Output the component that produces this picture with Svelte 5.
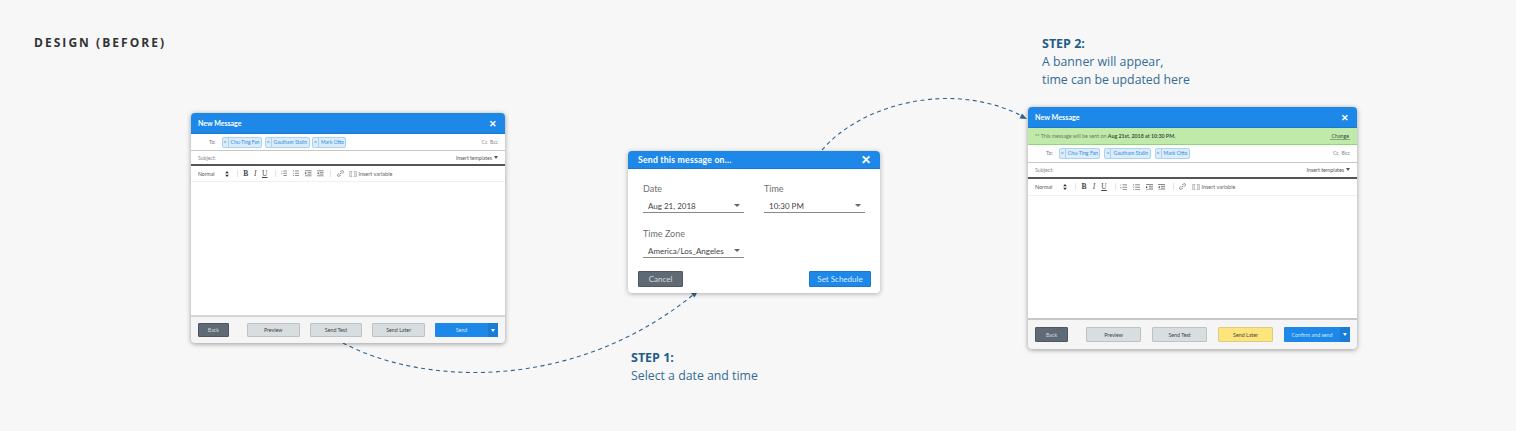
<script>
  const recipients = ['Chu-Ting Fan', 'Gautham Stalin', 'Mark Otto'];
</script>

{#snippet lines(kind)}
  <svg class="ic" viewBox="0 0 10 9" aria-hidden="true">
    {#if kind === 'ol'}
      <path d="M1 .5v2M.5 4.500h1.200L.6 6h1.200" class="thin"/><path d="M3.500 1h6.500M3.500 4.500h6.500M3.500 8h6.500"/>
    {:else if kind === 'ul'}
      <path d="M0 1h1.500M0 4.500h1.500M0 8h1.500M3 1h7M3 4.500h7M3 8h7"/>
    {:else if kind === 'in'}
      <path d="M0 .6h10M4 3.200h6M4 5.800h6M0 8.400h10"/><path d="M0 2.600 2.400 4.500 0 6.400z" class="fill"/>
    {:else}
      <path d="M0 .6h10M4 3.200h6M4 5.800h6M0 8.400h10"/><path d="M2.600 2.600 .2 4.500l2.400 1.900z" class="fill"/>
    {/if}
  </svg>
{/snippet}

{#snippet message(variant, sendLabel, banner)}
  <section class="win {variant}">
    <header class="win-head"><h2>New Message</h2><span class="x">✕</span></header>
    {#if banner}
      <div class="banner">
        <span>** This message will be sent on <b>Aug 21st, 2018 at 10:30 PM.</b></span>
        <a href="#change">Change</a>
      </div>
    {/if}
    <div class="to">
      <span class="to-label">To:</span>
      {#each recipients as r}
        <span class="chip"><i>×</i><em>{r}</em></span>
      {/each}
      <span class="cc">Cc&nbsp;&nbsp;Bcc</span>
    </div>
    <div class="subject"><span>Subject:</span><span class="tpl">Insert templates <i class="caret"></i></span></div>
    <div class="tools">
      <span class="normal">Normal</span>
      <svg class="updown" viewBox="0 0 5 8" aria-hidden="true"><path d="M2.500 0 5 3H0zM2.500 8 0 5h5z"/></svg>
      <span class="sep before-fmt"></span>
      <b class="fmt">B</b><i class="fmt it">I</i><u class="fmt">U</u>
      <span class="sep after-fmt"></span>
      {@render lines('ol')}{@render lines('ul')}{@render lines('in')}{@render lines('out')}
      <span class="sep after-ic"></span>
      <svg class="ic link" viewBox="0 0 10 10" aria-hidden="true"><path d="M4 6 6 4M3 4.600 1.300 6.300a1.700 1.700 0 0 0 2.400 2.400L5.400 7M4.600 3l1.700-1.700a1.700 1.700 0 0 1 2.400 2.400L7 5.400"/></svg>
      <span class="var">[[ ]] Insert variable</span>
    </div>
    <div class="body"></div>
    <footer class="foot">
      <button class="btn back">Back</button>
      <button class="btn grey first">Preview</button>
      <button class="btn grey">Send Test</button>
      <button class="btn {banner ? 'yellow' : 'grey'}">Send Later</button>
      <div class="send"><button class="btn main">{sendLabel}</button><span class="drop"><i class="caret"></i></span></div>
    </footer>
  </section>
{/snippet}

<main class="page">
  <h1 class="title">DESIGN (BEFORE)</h1>

  <svg class="arrows" viewBox="0 0 1516 431" aria-hidden="true">
    <path class="dash" d="M343 343C420 384 570 394 693 295"/>
    <path class="head" d="M698 291l-7 2 3.500 4.500z"/>
    <path class="dash" d="M822 150C860 105 950 80 1020 115"/>
    <path class="head" d="M1027 119l-7.500-.5 2.500-5z"/>
  </svg>

  {@render message('a', 'Send', false)}
  {@render message('b', 'Confirm and send', true)}

  <section class="dialog">
    <header class="dlg-head"><h2>Send this message on...</h2><span class="x">✕</span></header>
    <div class="fields">
      <label class="field"><span>Date</span><div class="select">Aug 21, 2018<i class="caret"></i></div></label>
      <label class="field"><span>Time</span><div class="select">10:30 PM<i class="caret"></i></div></label>
      <label class="field"><span>Time Zone</span><div class="select">America/Los_Angeles<i class="caret"></i></div></label>
    </div>
    <footer class="dlg-foot">
      <button class="dbtn cancel">Cancel</button>
      <button class="dbtn set">Set Schedule</button>
    </footer>
  </section>

  <p class="step s1"><b>STEP 1:</b><br>Select a date and time</p>
  <p class="step s2"><b>STEP 2:</b><br>A banner will appear,<br>time can be updated here</p>
</main>

<style>
  :global(body) { margin: 0; background: #f7f7f7; }
  .page { position: relative; width: 1516px; height: 431px; overflow: hidden; background: #f7f7f7; font-family: Lato, sans-serif; color: #444; }
  .title { position: absolute; left: 34px; top: 35px; margin: 0; font: 700 12px/16px "Open Sans", sans-serif; letter-spacing: 2.050px; color: #333; }
  .arrows { position: absolute; inset: 0; width: 1516px; height: 431px; }
  .dash { fill: none; stroke: #2f6391; stroke-width: 1.100; stroke-dasharray: 4 3.500; }
  .head { fill: #2f6391; }

  .win { position: absolute; display: flex; flex-direction: column; box-sizing: border-box; background: #f5f5f5; border-radius: 4px; box-shadow: 0 1px 5px rgba(0,0,0,.38); overflow: hidden; }
  .win.a { left: 191px; top: 113px; width: 314px; height: 230px; --fs: 5.100px; --chip: 5px; --chip-gap: 2.500px; --to-left: 18px; --to-h: 16px; --sub-h: 15px; --tool-h: 15px; --normal: 27px; --fmt: 9.500px; --ic: 6.500px; --ic-gap: 5.800px; --sep-l: .7px; --var-gap: 5px; }
  .win.b { left: 1028px; top: 107px; width: 329px; height: 242px; --fs: 5.300px; --chip: 5.200px; --chip-gap: 4px; --to-left: 18px; --to-h: 16.500px; --sub-h: 16.500px; --tool-h: 15.500px; --normal: 28px; --fmt: 10px; --ic: 7px; --ic-gap: 5.800px; --sep-l: 1.700px; --var-gap: 5.500px; }
  .win-head { flex: none; display: flex; align-items: center; justify-content: space-between; height: 21px; padding: 0 8px 0 7px; background: #1e88e9; border-bottom: 1px solid #1a78cf; box-sizing: border-box; color: #fff; }
  .win-head h2 { margin: 0; font-size: 7px; font-weight: 700; }
  .win.b .win-head h2 { font-size: 7.200px; }
  .win-head .x { font-size: 9px; font-weight: 700; }
  .banner { flex: none; display: flex; justify-content: space-between; align-items: center; height: 17px; padding: 0 7px; background: #bfeaa9; border-bottom: 1px solid #8ed67a; box-sizing: border-box; font-size: 5.300px; color: #6b7a66; }
  .banner b { color: #44503f; font-weight: 700; }
  .banner a { color: #444; text-decoration: none; border-bottom: 1px solid #8aa57d; padding: 0 1px; font-size: 5.300px; }
  .to { flex: none; display: flex; align-items: center; height: var(--to-h); padding: 0 7px 0 var(--to-left); background: #fff; border-bottom: 1px solid #c8c8c8; font-size: var(--fs); color: #777; }
  .to-label { margin-right: 6px; }
  .chip { display: flex; align-items: center; height: 9px; margin-right: var(--chip-gap); border: 1px solid #a9d3f3; border-radius: 2px; background: #dcecfa; color: #2c8ce0; font-size: var(--chip); }
  .chip i { width: 5px; text-align: center; font-style: normal; border-right: 1px solid #a9d3f3; line-height: 9px; }
  .chip em { font-style: normal; padding: 0 1.500px 0 2px; }
  .cc { margin-left: auto; color: #888; }
  .subject { flex: none; display: flex; align-items: center; justify-content: space-between; height: var(--sub-h); padding: 0 7px; background: #fff; border-bottom: 2px solid #555; font-size: var(--fs); color: #888; box-sizing: border-box; }
  .tpl { color: #555; display: flex; align-items: center; gap: 2px; }
  .caret { display: inline-block; width: 0; height: 0; border: 2.500px solid transparent; border-bottom: 0; border-top: 3px solid currentColor; }
  .tools { flex: none; display: flex; align-items: center; height: var(--tool-h); padding: 0 7px; background: #fff; border-bottom: 1px solid #f0f0f0; font-size: var(--fs); color: #555; }
  .normal { width: var(--normal); }
  .updown { width: 4px; height: 6px; fill: #333; margin-right: 3px; }
  .sep { width: 1px; height: 7px; background: #e4e4e4; margin: 0 4.500px; }
  .sep.before-fmt { margin-right: 3.500px; }
  .sep.after-fmt { margin-left: 5.500px; }
  .sep.after-ic { margin-left: var(--sep-l); }
  .fmt { display: inline-block; width: var(--fmt); text-align: center; font-size: 7.500px; font-style: normal; color: #444; font-family: "Liberation Serif", serif; }
  .it { font-style: italic; }
  .ic { width: var(--ic); height: 6.500px; margin-right: var(--ic-gap); fill: none; stroke: #444; stroke-width: .9; flex: none; }
  .ic .thin { stroke-width: .5; }
  .ic .fill { fill: #444; stroke: none; }
  .ic.link { width: 7px; height: 7px; margin-left: 1px; margin-right: var(--var-gap); }
  .var { color: #666; white-space: nowrap; font-size: 5.500px; }
  .body { flex: 1; min-height: 0; background: #fff; border-bottom: 2px solid #d4d4d4; }
  .win.b .body { border-bottom-color: #c4c8ca; }
  .foot { flex: none; display: flex; align-items: center; gap: 10px; height: 26px; padding: 0 7px; }
  .win.b .foot { height: 29px; gap: 11px; }
  .btn { box-sizing: border-box; height: 14px; width: 53px; padding: 0; border: 1px solid #bcc3c7; border-radius: 1px; font: 5.300px Lato, sans-serif; color: #444; }
  .win.b .btn { height: 15px; width: 55px; }
  .grey { background: #d8dde0; }
  .yellow { background: #fde47c; border-color: #d9cc86; }
  .back { width: 31px; background: #5f6a75; border-color: #4d5661; color: #cfd4d8; }
  .win.b .btn.back { width: 33px; }
  .first { margin-left: 8px; }
  .win.b .first { margin-left: 7px; }
  .send { display: flex; color: #fff; }
  .btn.main { width: 53px; background: #1e88e9; border: 0; color: #cfe6fb; border-radius: 1px 0 0 1px; }
  .win.b .btn.main { width: 56px; }
  .drop { display: flex; align-items: center; justify-content: center; width: 10px; background: #1b7cd6; }

  .dialog { position: absolute; left: 628px; top: 151px; width: 252px; height: 142px; display: flex; flex-direction: column; background: #fff; border-radius: 4px; box-shadow: 0 1px 5px rgba(0,0,0,.3); overflow: hidden; }
  .dlg-head { flex: none; display: flex; align-items: center; justify-content: space-between; height: 17px; padding: 0 9px 0 10px; background: #1e88e9; border-bottom: 1px solid #1a78cf; color: #fff; }
  .dlg-head h2 { margin: 0; font-size: 8.700px; font-weight: 700; letter-spacing: .2px; }
  .dlg-head .x { font-size: 12px; font-weight: 700; }
  .fields { flex: none; display: grid; grid-template-columns: 101px 101px; column-gap: 20px; row-gap: 14px; padding: 13px 0 0 15px; }
  .field { display: flex; flex-direction: column; font-size: 9px; color: #6f6f6f; }
  .field > span { height: 14px; line-height: 14px; }
  .select { display: flex; align-items: center; justify-content: space-between; height: 17px; padding: 3px 4px 0 5px; box-sizing: border-box; border-bottom: 1px solid #888; font-size: 8px; color: #444; }
  .select .caret { color: #666; border-width: 3px 3px 0; border-top-style: solid; }
  .dlg-foot { margin-top: auto; display: flex; justify-content: space-between; padding: 0 9px 6px 10px; }
  .dbtn { box-sizing: border-box; height: 16px; border-radius: 1px; font: 8px Lato, sans-serif; padding: 0; }
  .cancel { width: 45px; background: #5f6a75; border: 1px solid #4d5661; color: #d6dade; }
  .set { width: 62px; background: #1e88e9; border: 1px solid #1a78cf; color: #d8ebfc; }

  .step { position: absolute; margin: 0; font: 400 12.300px/18px "Open Sans", sans-serif; color: #356b96; }
  .step b { color: #1f5d89; font-weight: 700; font-size: 12.500px; }
  .s1 { left: 631px; top: 349px; }
  .s2 { left: 1042px; top: 35px; }
</style>
